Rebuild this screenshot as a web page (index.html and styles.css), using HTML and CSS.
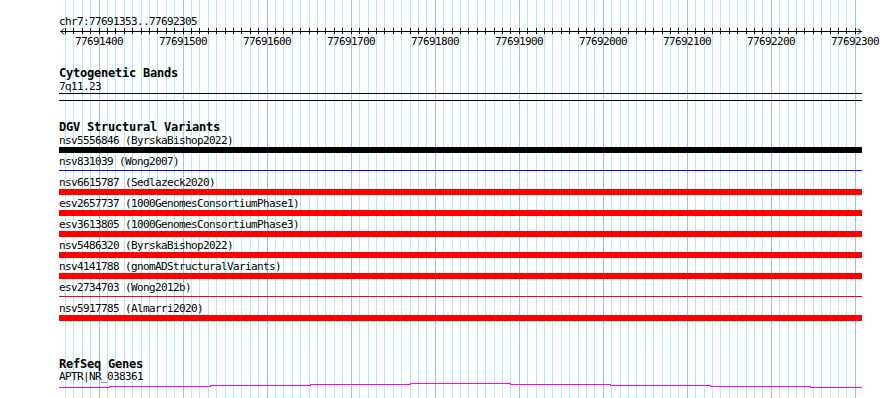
FILE: index.html
```html
<!DOCTYPE html>
<html>
<head>
<meta charset="utf-8">
<title>chr7:77691353..77692305</title>
<link rel="stylesheet" href="styles.css">
</head>
<body>
<div class="panel">
  <svg class="grid" width="890" height="398" viewBox="0 0 890 398" shape-rendering="crispEdges">
    <path class="grid-minor" d="M65.5 0V398M73.5 0V398M82.5 0V398M90.5 0V398M107.5 0V398M115.5 0V398M124.5 0V398M132.5 0V398M141.5 0V398M149.5 0V398M157.5 0V398M166.5 0V398M174.5 0V398M191.5 0V398M199.5 0V398M208.5 0V398M216.5 0V398M225.5 0V398M233.5 0V398M241.5 0V398M250.5 0V398M258.5 0V398M275.5 0V398M283.5 0V398M292.5 0V398M300.5 0V398M309.5 0V398M317.5 0V398M325.5 0V398M334.5 0V398M342.5 0V398M359.5 0V398M368.5 0V398M376.5 0V398M384.5 0V398M393.5 0V398M401.5 0V398M410.5 0V398M418.5 0V398M426.5 0V398M443.5 0V398M452.5 0V398M460.5 0V398M468.5 0V398M477.5 0V398M485.5 0V398M494.5 0V398M502.5 0V398M510.5 0V398M527.5 0V398M536.5 0V398M544.5 0V398M552.5 0V398M561.5 0V398M569.5 0V398M578.5 0V398M586.5 0V398M594.5 0V398M611.5 0V398M620.5 0V398M628.5 0V398M636.5 0V398M645.5 0V398M653.5 0V398M662.5 0V398M670.5 0V398M678.5 0V398M695.5 0V398M704.5 0V398M712.5 0V398M720.5 0V398M729.5 0V398M737.5 0V398M746.5 0V398M754.5 0V398M762.5 0V398M779.5 0V398M788.5 0V398M796.5 0V398M804.5 0V398M813.5 0V398M821.5 0V398M830.5 0V398M838.5 0V398M846.5 0V398"/>
    <path class="grid-major" d="M99.5 0V398M183.5 0V398M267.5 0V398M351.5 0V398M435.5 0V398M519.5 0V398M603.5 0V398M687.5 0V398M771.5 0V398M855.5 0V398"/>
  </svg>

  <div class="track ruler">
    <div class="text-row track-body">chr7:77691353..77692305</div>
    <svg class="axis" width="890" height="7" viewBox="0 28 890 7" shape-rendering="crispEdges">
      <path class="axis-line" d="M60 31.5H862"/>
      <path class="axis-arrow" shape-rendering="auto" d="M64 28.5L61 31.5L64 34.5M858 28.5L861 31.5L858 34.5"/>
      <path class="axis-ticks" d="M65.5 28V34M73.5 28V34M82.5 28V34M90.5 28V34M99.5 28V34M107.5 28V34M115.5 28V34M124.5 28V34M132.5 28V34M141.5 28V34M149.5 28V34M157.5 28V34M166.5 28V34M174.5 28V34M183.5 28V34M191.5 28V34M199.5 28V34M208.5 28V34M216.5 28V34M225.5 28V34M233.5 28V34M241.5 28V34M250.5 28V34M258.5 28V34M267.5 28V34M275.5 28V34M283.5 28V34M292.5 28V34M300.5 28V34M309.5 28V34M317.5 28V34M325.5 28V34M334.5 28V34M342.5 28V34M351.5 28V34M359.5 28V34M368.5 28V34M376.5 28V34M384.5 28V34M393.5 28V34M401.5 28V34M410.5 28V34M418.5 28V34M426.5 28V34M435.5 28V34M443.5 28V34M452.5 28V34M460.5 28V34M468.5 28V34M477.5 28V34M485.5 28V34M494.5 28V34M502.5 28V34M510.5 28V34M519.5 28V34M527.5 28V34M536.5 28V34M544.5 28V34M552.5 28V34M561.5 28V34M569.5 28V34M578.5 28V34M586.5 28V34M594.5 28V34M603.5 28V34M611.5 28V34M620.5 28V34M628.5 28V34M636.5 28V34M645.5 28V34M653.5 28V34M662.5 28V34M670.5 28V34M678.5 28V34M687.5 28V34M695.5 28V34M704.5 28V34M712.5 28V34M720.5 28V34M729.5 28V34M737.5 28V34M746.5 28V34M754.5 28V34M762.5 28V34M771.5 28V34M779.5 28V34M788.5 28V34M796.5 28V34M804.5 28V34M813.5 28V34M821.5 28V34M830.5 28V34M838.5 28V34M846.5 28V34M855.5 28V34"/>
    </svg>
    <div class="ruler-labels">
      <span class="ruler-label" style="left:75px">77691400</span>
      <span class="ruler-label" style="left:159px">77691500</span>
      <span class="ruler-label" style="left:243px">77691600</span>
      <span class="ruler-label" style="left:327px">77691700</span>
      <span class="ruler-label" style="left:411px">77691800</span>
      <span class="ruler-label" style="left:495px">77691900</span>
      <span class="ruler-label" style="left:579px">77692000</span>
      <span class="ruler-label" style="left:663px">77692100</span>
      <span class="ruler-label" style="left:747px">77692200</span>
      <span class="ruler-label" style="left:831px">77692300</span>
    </div>
  </div>

  <div class="track cyto">
    <div class="track-title track-body">Cytogenetic Bands</div>
    <div class="text-row track-body">7q11.23</div>
    <div class="rule track-body"></div>
    <div class="rule rule-second track-body"></div>
  </div>

  <div class="track dgv">
    <div class="track-title track-body">DGV Structural Variants</div>
    <div class="feature track-body">
      <div class="text-row">nsv5556846 (ByrskaBishop2022)</div>
      <div class="glyph"><div class="bar bar-black"></div></div>
    </div>
    <div class="feature track-body">
      <div class="text-row">nsv831039 (Wong2007)</div>
      <div class="glyph"><div class="thin thin-blue"></div></div>
    </div>
    <div class="feature track-body">
      <div class="text-row">nsv6615787 (Sedlazeck2020)</div>
      <div class="glyph"><div class="bar bar-red"></div></div>
    </div>
    <div class="feature track-body">
      <div class="text-row">esv2657737 (1000GenomesConsortiumPhase1)</div>
      <div class="glyph"><div class="bar bar-red"></div></div>
    </div>
    <div class="feature track-body">
      <div class="text-row">esv3613805 (1000GenomesConsortiumPhase3)</div>
      <div class="glyph"><div class="bar bar-red"></div></div>
    </div>
    <div class="feature track-body">
      <div class="text-row">nsv5486320 (ByrskaBishop2022)</div>
      <div class="glyph"><div class="bar bar-red"></div></div>
    </div>
    <div class="feature track-body">
      <div class="text-row">nsv4141788 (gnomADStructuralVariants)</div>
      <div class="glyph"><div class="bar bar-red"></div></div>
    </div>
    <div class="feature track-body">
      <div class="text-row">esv2734703 (Wong2012b)</div>
      <div class="glyph"><div class="thin thin-red"></div></div>
    </div>
    <div class="feature track-body">
      <div class="text-row">nsv5917785 (Almarri2020)</div>
      <div class="glyph"><div class="bar bar-red"></div></div>
    </div>
  </div>

  <div class="track refseq">
    <div class="track-title track-body">RefSeq Genes</div>
    <div class="text-row gene-label track-body">APTR|NR_038361</div>
    <svg class="hat" width="890" height="6" viewBox="0 382 890 6" shape-rendering="crispEdges">
      <path d="M59 387.5H109V386.5H210V385.5H310V384.5H410V383.5H510V384.5H610V385.5H710V386.5H810V387.5H862"/>
    </svg>
  </div>
</div>
</body>
</html>
```

FILE: styles.css
```css
* {
  box-sizing: border-box;
}

html,
body {
  margin: 0;
  padding: 0;
}

body {
  width: 890px;
  height: 398px;
  overflow: hidden;
  background: #ffffff;
  color: #000000;
  font-family: "DejaVu Sans Mono", "Liberation Mono", monospace;
  font-size: 11px;
}

.panel {
  position: relative;
  z-index: 0;
  width: 890px;
  height: 398px;
}

.grid {
  position: absolute;
  left: 0;
  top: 0;
  z-index: -1;
}

.grid-minor {
  stroke: #b0ecec;
  stroke-width: 1;
  fill: none;
}

.grid-major {
  stroke: #94c6e4;
  stroke-width: 1;
  fill: none;
}

.track-body {
  margin-left: 59px;
  width: 803px;
}

.text-row {
  height: 13px;
  line-height: 13px;
  white-space: nowrap;
  letter-spacing: -0.62px;
}

.track-title {
  height: 13px;
  line-height: 13px;
  font-size: 12px;
  font-weight: bold;
  letter-spacing: -0.22px;
  white-space: nowrap;
}

/* ruler */
.ruler {
  padding-top: 15px;
}

.axis {
  display: block;
}

.axis-line,
.axis-ticks,
.axis-arrow {
  stroke: #000000;
  stroke-width: 1;
  fill: none;
}

.ruler-labels {
  position: relative;
  height: 13px;
  line-height: 13px;
  letter-spacing: -0.62px;
}

.ruler-label {
  position: absolute;
  top: 0;
  white-space: nowrap;
}

/* cytogenetic bands */
.cyto {
  margin-top: 19px;
}

.rule {
  height: 1px;
  background: #000000;
}

.rule-second {
  margin-top: 6px;
}

/* DGV */
.dgv {
  margin-top: 20px;
}

.feature {
  height: 21px;
}

.glyph {
  height: 6px;
}

.bar {
  height: 6px;
}

.bar-black {
  background: #000000;
}

.bar-red {
  background: #ff0000;
}

.thin {
  height: 1px;
  margin-top: 2px;
}

.thin-blue {
  background: #0000ff;
}

.thin-red {
  background: #ff0000;
}

/* RefSeq */
.refseq {
  margin-top: 35px;
}

.gene-label {
  position: relative;
  z-index: 1;
  height: 14px;
  line-height: 12px;
}

.hat {
  display: block;
  margin-top: -3px;
}

.hat path {
  stroke: #ff00ff;
  stroke-width: 1;
  fill: none;
}
```
